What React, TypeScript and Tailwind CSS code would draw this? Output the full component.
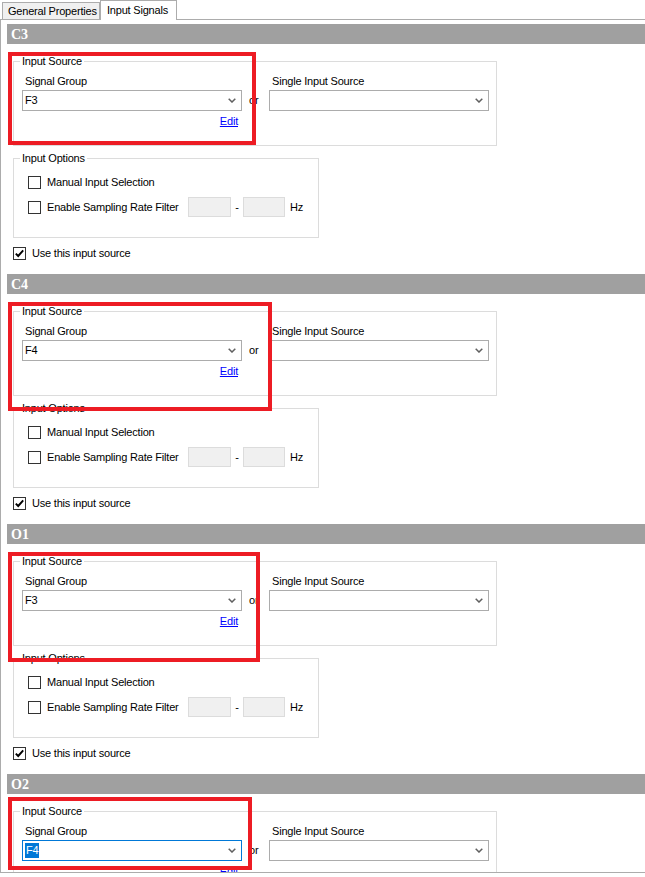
import React from "react";

type Section = {
  id: string;
  group: string;
  focused?: boolean;
  mark: string;
};

// red call-out frames drawn over each input source box
const sections: Section[] = [
  { id: "C3", group: "F3", mark: "top-[32px] w-[248px] h-[93px]" },
  { id: "C4", group: "F4", mark: "top-[32px] w-[264px] h-[109px]" },
  { id: "O1", group: "F3", mark: "top-[32px] w-[252px] h-[110px]" },
  { id: "O2", group: "F4", focused: true, mark: "top-[27px] w-[244px] h-[73px]" },
];

function Chevron() {
  return (
    <svg width="8" height="5" viewBox="0 0 8 5" className="shrink-0">
      <path d="M0.7 0.7 L4 4 L7.3 0.7" fill="none" stroke="#606060" strokeWidth="1.5" />
    </svg>
  );
}

function Combo({ value, focused }: { value?: string; focused?: boolean }) {
  return (
    <div
      className={`flex items-center justify-between h-[21px] w-[220px] border bg-white pl-[2px] pr-[5px] ${
        focused ? "border-[#0078d7]" : "border-[#acacac]"
      }`}
    >
      {focused ? (
        <span className="bg-[#0078d7] text-white leading-[15px] px-[1px]">{value}</span>
      ) : (
        <span>{value}</span>
      )}
      <Chevron />
    </div>
  );
}

function Check({ checked }: { checked?: boolean }) {
  return (
    <span className="flex items-center justify-center w-[13px] h-[13px] border border-[#333333] bg-white shrink-0">
      {checked && (
        <svg width="11" height="11" viewBox="0 0 11 11">
          <path d="M1.8 5.6 L4.2 8 L9.2 2.4" fill="none" stroke="#000" strokeWidth="1.9" />
        </svg>
      )}
    </span>
  );
}

function SectionBlock({ s }: { s: Section }) {
  return (
    <div className="relative h-[250px] pt-[4px] pl-[6px]">
      <div className="h-[20px] bg-[#a0a0a0] pl-[4px] flex items-center text-white font-bold text-[14px] tracking-normal font-['Liberation_Serif',serif]">
        {s.id}
      </div>

      <div className="pl-[6px]">
        <fieldset className="mt-[11px] w-[484px] border border-[#dcdcdc]">
          <legend className="ml-[6px] px-[2px] leading-[13px]">Input Source</legend>
          <div className="flex items-start pl-[8px] pb-[17px]">
            <div className="flex flex-col w-[220px]">
              <span className="mt-[7px] pl-[3px] leading-[13px]">Signal Group</span>
              <div className="mt-[2px]">
                <Combo value={s.group} focused={s.focused} />
              </div>
              <a className="mt-[4px] self-end mr-[4px] leading-[13px] text-[#0000ff] underline">Edit</a>
            </div>
            <span className="mt-[26px] ml-[7px] w-[20px] leading-[13px]">or</span>
            <div className="flex flex-col w-[220px]">
              <span className="mt-[7px] pl-[3px] leading-[13px]">Single Input Source</span>
              <div className="mt-[2px]">
                <Combo />
              </div>
            </div>
          </div>
        </fieldset>

        <fieldset className="mt-[6px] w-[306px] border border-[#dcdcdc]">
          <legend className="ml-[6px] px-[2px] leading-[13px]">Input Options</legend>
          <div className="pl-[14px] pb-[20px]">
            <div className="mt-[7px] h-[20px] flex items-center gap-[6px]">
              <Check />
              <span>Manual Input Selection</span>
            </div>
            <div className="mt-[5px] h-[20px] flex items-center">
              <Check />
              <span className="ml-[6px] w-[141px]">Enable Sampling Rate Filter</span>
              <span className="w-[43px] h-[20px] border border-[#dcdcdc] bg-[#f0f0f0]" />
              <span className="w-[12px] text-center">-</span>
              <span className="w-[42px] h-[20px] border border-[#dcdcdc] bg-[#f0f0f0]" />
              <span className="ml-[5px]">Hz</span>
            </div>
          </div>
        </fieldset>

        <div className="mt-[9px] flex items-center gap-[6px] h-[13px]">
          <Check checked />
          <span>Use this input source</span>
        </div>
      </div>

      <div className={`absolute left-[7px] border-[4px] border-[#ed1c24] ${s.mark}`} />
    </div>
  );
}

export default function App() {
  return (
    <div className="w-[645px] h-[877px] bg-white overflow-hidden text-[11px] tracking-[-0.2px] text-black font-['Liberation_Sans',Arial,sans-serif]">
      <div className="h-[19px] flex items-end">
        <div className="ml-[2px] h-[17px] w-[98px] border border-b-0 border-[#acacac] bg-[#f0f0f0] pl-[5px] flex items-center">
          General Properties
        </div>
        <div className="relative z-10 -mb-px h-[20px] w-[77px] border border-b-0 border-[#acacac] bg-white pl-[6px] flex items-center">
          Input Signals
        </div>
      </div>

      <div className="h-[854px] border-l border-t border-b border-[#acacac] overflow-hidden">
        {sections.map((s) => (
          <SectionBlock key={s.id} s={s} />
        ))}
      </div>
    </div>
  );
}
